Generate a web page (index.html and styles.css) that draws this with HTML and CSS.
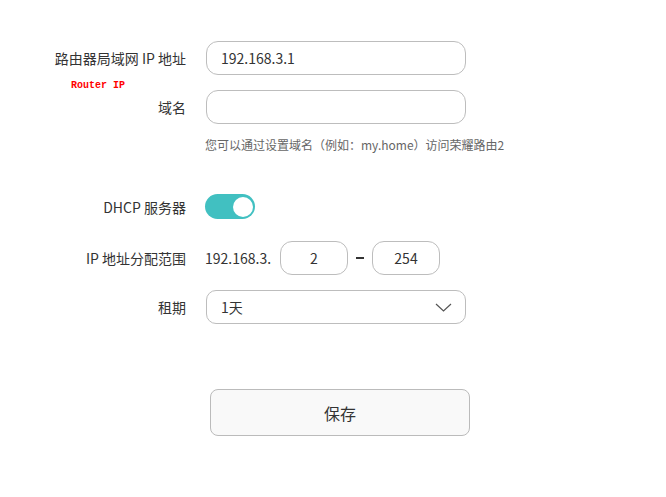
FILE: index.html
```html
<!DOCTYPE html>
<html lang="zh">
<head>
<meta charset="utf-8">
<link rel="stylesheet" href="styles.css">
</head>
<body>
<form class="form">
  <div class="row row-lan">
    <label class="label">路由器局域网 IP 地址<span class="note">Router IP</span></label>
    <input class="input" type="text" value="192.168.3.1">
  </div>
  <div class="row row-domain">
    <label class="label">域名</label>
    <input class="input" type="text" value="">
  </div>
  <div class="hint">您可以通过设置域名（例如：my.home）访问荣耀路由2</div>
  <div class="row row-dhcp">
    <label class="label">DHCP 服务器</label>
    <span class="toggle"><span class="knob"></span></span>
  </div>
  <div class="row row-range">
    <label class="label">IP 地址分配范围</label>
    <span class="prefix">192.168.3.</span>
    <input class="input small" type="text" value="2">
    <span class="dash"></span>
    <input class="input small" type="text" value="254">
  </div>
  <div class="row row-lease">
    <label class="label">租期</label>
    <div class="select">
      <span>1天</span>
      <svg class="chev" width="17" height="9" viewBox="0 0 17 9"><path d="M1 1 L8.5 8 L16 1" fill="none" stroke="#555" stroke-width="1.2"/></svg>
    </div>
  </div>
  <div class="actions">
    <button class="save" type="button">保存</button>
  </div>
</form>
</body>
</html>
```
FILE: styles.css
```css
* { box-sizing: border-box; }
body {
  margin: 0;
  background: #fff;
  font-family: "Noto Sans CJK SC", "Noto Sans", sans-serif;
  color: #333;
  font-size: 14px;
}
.form {
  padding-top: 41px;
  display: flex;
  flex-direction: column;
}
.row {
  display: flex;
  align-items: center;
}
.label {
  position: relative;
  width: 186px;
  margin-right: 20px;
  text-align: right;
  font-size: 14px;
  color: #333;
  flex: none;
}
.note {
  position: absolute;
  left: 71px;
  top: 32px;
  font-family: "Liberation Mono", "Courier New", monospace;
  font-size: 10px;
  line-height: 12px;
  font-weight: bold;
  color: #f00;
  white-space: nowrap;
}
.input {
  width: 260px;
  height: 34px;
  border: 1px solid #bdbdbd;
  border-radius: 12px;
  padding: 0 14px;
  font: inherit;
  font-size: 14px;
  color: #333;
  background: #fff;
  outline: none;
}
.row-domain { margin-top: 15px; }
.hint {
  margin: 12px 0 0 205px;
  font-size: 12px;
  line-height: 18px;
  color: #666;
  white-space: nowrap;
}
.row-dhcp { margin-top: 40px; height: 25px; }
.toggle {
  width: 50px;
  height: 25px;
  border-radius: 13px;
  background: #41c0c1;
  display: flex;
  align-items: center;
  justify-content: flex-end;
  padding-right: 2px;
  margin-left: -1px;
}
.knob {
  width: 20px;
  height: 20px;
  border-radius: 50%;
  background: #fff;
}
.row-range { margin-top: 22px; }
.prefix { margin-left: -1px; width: 75px; }
.input.small {
  width: 68px;
  text-align: center;
  padding: 0;
}
.dash {
  width: 8px;
  height: 2px;
  background: #333;
  margin: 0 8px;
}
.row-lease { margin-top: 15px; }
.select {
  width: 260px;
  height: 34px;
  border: 1px solid #bdbdbd;
  border-radius: 10px;
  padding: 0 13px 0 14px;
  display: flex;
  align-items: center;
  justify-content: space-between;
}
.chev { display: block; margin-top: 1px; }
.actions { margin-top: 65px; padding-left: 210px; }
.save {
  width: 260px;
  height: 47px;
  border: 1px solid #bbb;
  border-radius: 8px;
  background: #f9f9f9;
  font: inherit;
  font-size: 16px;
  color: #333;
}
```
